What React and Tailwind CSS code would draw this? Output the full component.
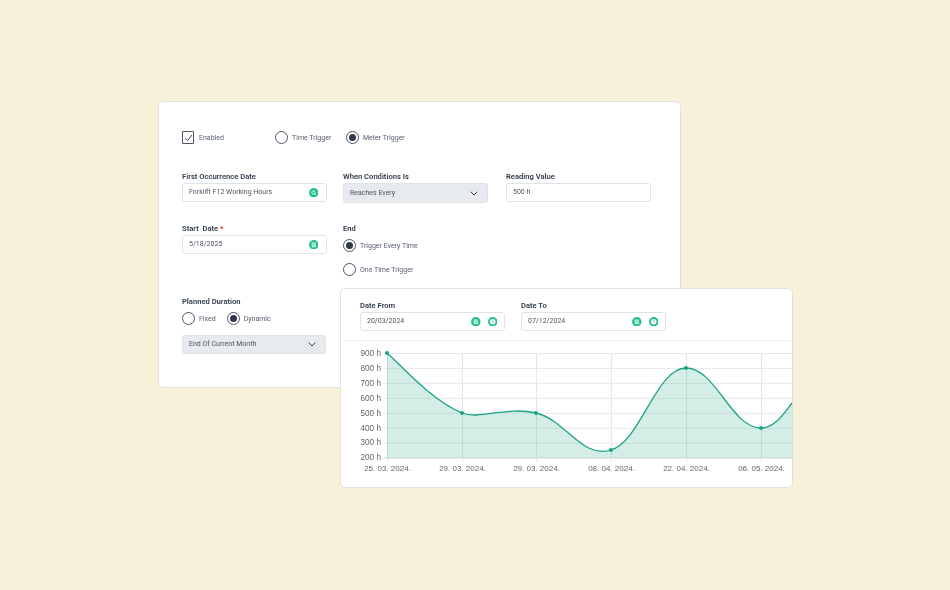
import React from "react";

const CURVE =
  "M387 353 C402 366 432 401 462 413 C480 420 506 406 536 413 C566 420 581 459 611 450 C641 441 656 368 686 368 C716 368 731 428 761 428 C775 428 785 412 792 403";

const Label = ({ children }) => (
  <div className="text-[7.6px] leading-[10px] font-semibold text-[#2f3b4c] mb-[1px]">{children}</div>
);

const Radio = ({ checked, label }) => (
  <div className="flex items-center gap-[4px]">
    <span className="w-[13px] h-[13px] rounded-full border border-[#4a5565] bg-white flex items-center justify-center">
      {checked && <span className="w-[7px] h-[7px] rounded-full bg-[#2f3b4c]" />}
    </span>
    <span className="text-[7px] leading-[10px] text-[#56616f]">{label}</span>
  </div>
);

const SearchIcon = () => (
  <svg width="9.5" height="9.5" viewBox="0 0 18 18">
    <circle cx="9" cy="9" r="9" fill="#21bf8d" />
    <circle cx="8.5" cy="8.5" r="3.2" fill="none" stroke="#fff" strokeWidth="1.6" />
    <path d="M11 11l2.4 2.4" stroke="#fff" strokeWidth="1.6" strokeLinecap="round" />
  </svg>
);

const CalendarIcon = () => (
  <svg width="9.5" height="9.5" viewBox="0 0 18 18">
    <circle cx="9" cy="9" r="9" fill="#21bf8d" />
    <rect x="5" y="4.5" width="8" height="9" rx="1" fill="#fff" opacity="0.85" />
    <path d="M5 7.2h8M6.5 9.5h5M6.5 11.5h5" stroke="#21bf8d" strokeWidth="0.9" />
  </svg>
);

const ClockIcon = () => (
  <svg width="9.5" height="9.5" viewBox="0 0 18 18">
    <circle cx="9" cy="9" r="9" fill="#21bf8d" />
    <circle cx="9" cy="9" r="5.2" fill="#fff" />
    <path d="M9 6v3.2l2.2 1.4" fill="none" stroke="#21bf8d" strokeWidth="1.3" />
  </svg>
);

const Chevron = () => (
  <svg width="8" height="5" viewBox="0 0 8 5">
    <path d="M1 1l3 3 3-3" fill="none" stroke="#2f3b4c" strokeWidth="1" strokeLinecap="round" strokeLinejoin="round" />
  </svg>
);

const Field = ({ value, children, className = "pr-[8px]" }) => (
  <div className={`h-[19px] bg-white border border-[#dfe3e8] rounded-[3px] pl-[6px] flex items-center justify-between ${className}`}>
    <span className="text-[7px] text-[#4a5563]">{value}</span>
    {children && <span className="flex items-center gap-[7px]">{children}</span>}
  </div>
);

const Select = ({ value, className = "" }) => (
  <div className={`h-[19px] bg-[#e7eaee] border border-[#dfe3e8] rounded-[3px] pl-[6px] pr-[9px] flex items-center justify-between ${className}`}>
    <span className="text-[7px] text-[#4a5563]">{value}</span>
    <Chevron />
  </div>
);

const Chart = () => {
  const yLabels = ["900 h", "800 h", "700 h", "600 h", "500 h", "400 h", "300 h", "200 h"];
  const xLabels = ["25. 03. 2024.", "29. 03. 2024.", "29. 03. 2024.", "08. 04. 2024.", "22. 04. 2024.", "06. 05. 2024."];
  const xs = [387, 462, 536, 611, 686, 761];
  const points = [[387, 353], [462, 413], [536, 413], [611, 450], [686, 368], [761, 428]];

  // chart drawn in page coordinates, the card starts at 341,289
  return (
    <svg width="451" height="147" viewBox="341 341 451 147" className="block">
      {yLabels.map((l, i) => (
        <g key={l}>
          <line x1="383" x2="792" y1={353.5 + i * 14.95} y2={353.5 + i * 14.95} stroke="#e9e9e9" strokeWidth="1" />
          <text x="381" y={356 + i * 14.9} textAnchor="end" fontSize="8.2" fill="#666" fontFamily="Liberation Sans, sans-serif">{l}</text>
        </g>
      ))}
      {xs.map((x) => (
        <line key={x} x1={x + 0.5} x2={x + 0.5} y1="353" y2="462" stroke="#e6e6e6" strokeWidth="1" />
      ))}
      <path d={`${CURVE} L792 458 L387 458 Z`} fill="#1aa582" fillOpacity="0.19" />
      <line x1="383" x2="792" y1="458" y2="458" stroke="#d9dddb" strokeWidth="1" />
      <path d={CURVE} fill="none" stroke="#1ba483" strokeWidth="1.3" />
      {points.map(([x, y]) => (
        <circle key={x} cx={x} cy={y} r="2" fill="#1ba483" />
      ))}
      {xLabels.map((l, i) => (
        <text key={i} x={xs[i] + 0.5} y="471" textAnchor="middle" fontSize="8" fill="#666" fontFamily="Liberation Sans, sans-serif">{l}</text>
      ))}
    </svg>
  );
};

export default function App() {
  return (
    <div className="w-[950px] h-[590px] bg-[#f8f1da] flex items-center justify-center font-['Roboto',sans-serif]">
      <div className="relative w-[635px] h-[388px] will-change-transform">
        {/* form card */}
        <div className="w-[523px] h-[287px] bg-white border border-[#e2e2dc] rounded-[5px] pl-[23px] pt-[29px]">
          <div className="flex items-center h-[13px]">
            <div className="flex items-center gap-[5px] w-[93px]">
              <span className="w-[12px] h-[13px] border border-[#4a5565] flex items-center justify-center rounded-[1px]">
                <svg width="9" height="8" viewBox="0 0 9 8">
                  <path d="M1 4.2l2.4 2.4L8 1" fill="none" stroke="#2f3b4c" strokeWidth="1" />
                </svg>
              </span>
              <span className="text-[7px] leading-[10px] text-[#56616f]">Enabled</span>
            </div>
            <div className="w-[71px]"><Radio label="Time Trigger" /></div>
            <Radio checked label="Meter Trigger" />
          </div>

          <div className="flex mt-[28px]">
            <div className="w-[145px]">
              <Label>First Occurrence Date</Label>
              <Field value="Forklift F12 Working Hours"><SearchIcon /></Field>
            </div>
            <div className="w-[145px] ml-[16px]">
              <Label>When Conditions Is</Label>
              <Select value="Reaches Every" className="h-[20px]" />
            </div>
            <div className="w-[145px] ml-[18px]">
              <Label>Reading Value</Label>
              <Field value="500 h" />
            </div>
          </div>

          <div className="flex mt-[21px]">
            <div className="w-[145px]">
              <Label>Start&nbsp; Date <span className="text-[#d92d20]">*</span></Label>
              <Field value="5/18/2025"><CalendarIcon /></Field>
            </div>
            <div className="ml-[16px]">
              <Label>End</Label>
              <div className="flex flex-col gap-[11px] mt-[5px]">
                <Radio checked label="Trigger Every Time" />
                <Radio label="One Time Trigger" />
              </div>
            </div>
          </div>

          <div className="w-[144px] mt-[21px]">
            <Label>Planned Duration</Label>
            <div className="flex items-center gap-[11px] mt-[5px]">
              <Radio label="Fixed" />
              <Radio checked label="Dynamic" />
            </div>
            <Select value="End Of Current Month" className="mt-[10px]" />
          </div>
        </div>

        {/* chart card, overlaps the form */}
        <div className="absolute right-0 top-[187px] w-[453px] h-[200px] bg-white border border-[#e2e2dc] rounded-[5px] overflow-hidden">
          <div className="flex gap-[16px] pt-[12px] h-[52px] ml-[5px] pl-[14px] border-b border-[#eeeeee]">
            <div className="w-[145px]">
              <Label>Date From</Label>
              <Field value="20/03/2024" className="pr-[7px]">
                <CalendarIcon />
                <ClockIcon />
              </Field>
            </div>
            <div className="w-[145px]">
              <Label>Date To</Label>
              <Field value="07/12/2024" className="pr-[7px]">
                <CalendarIcon />
                <ClockIcon />
              </Field>
            </div>
          </div>
          <Chart />
        </div>
      </div>
    </div>
  );
}
